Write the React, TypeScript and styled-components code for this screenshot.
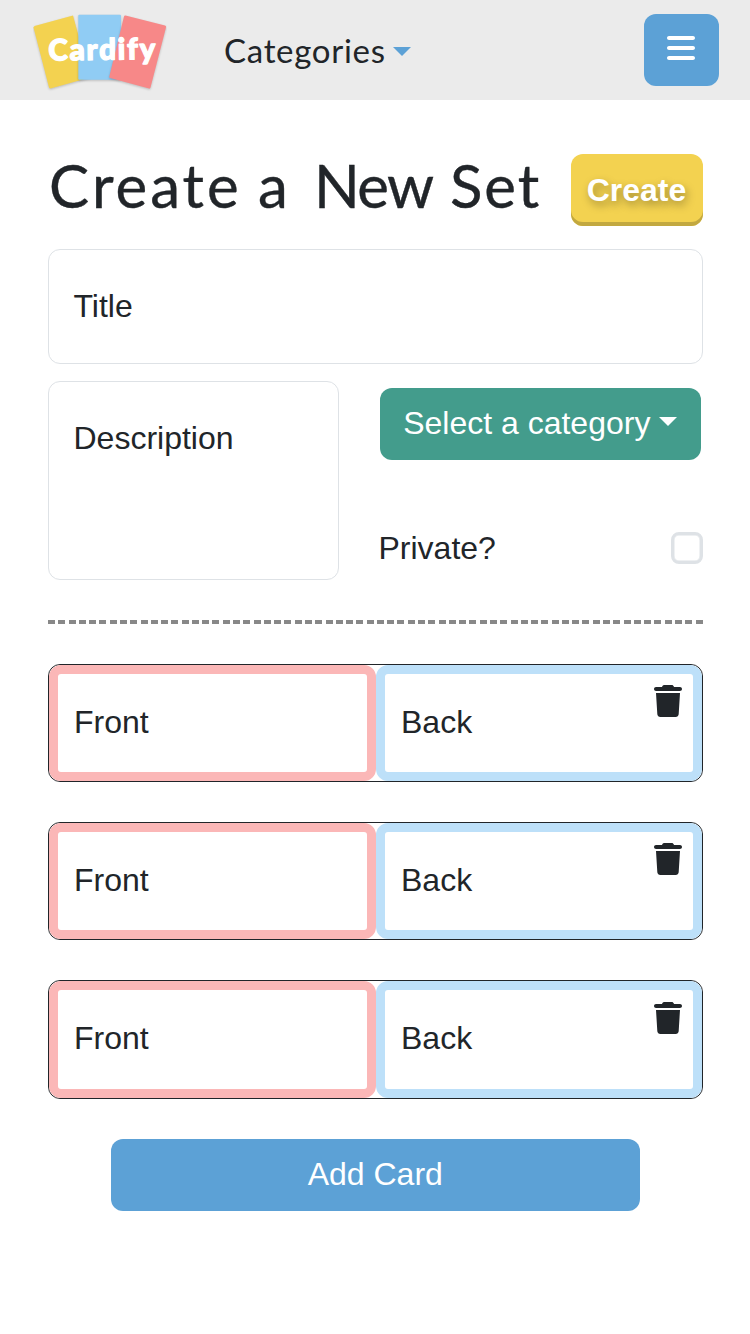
import React from "react";
import styled, { createGlobalStyle } from "styled-components";
import { FaBars, FaTrash } from "react-icons/fa6";

const ink = "#212529";
const blue = "#5ca1d6";

const GlobalStyle = createGlobalStyle`
  * { box-sizing: border-box; }
  body {
    margin: 0;
    background: #fff;
    color: ${ink};
    font: 32px/48px "Liberation Sans", Arial, sans-serif;
  }
  button { font: inherit; border: 0; cursor: pointer; }
`;

const Header = styled.header`
  display: flex;
  align-items: flex-start;
  height: 100px;
  padding: 13.5px 31px 0 33px;
  background: #ebebeb;
`;

const Logo = styled.svg`
  width: 134px;
  height: 78px;
  flex: none;
`;

const LogoCard = styled.g`
  filter: drop-shadow(0 1px 1px rgba(0, 0, 0, 0.2));
`;

const CategoriesLink = styled.button`
  display: flex;
  align-items: center;
  height: 72px;
  margin-left: 57px;
  padding: 0;
  background: none;
  color: ${ink};
  font: 33px/48px Lato, sans-serif;
  letter-spacing: 0.7px;
`;

const Caret = styled.span<{ color: string; gap: number; drop: number }>`
  width: 0;
  height: 0;
  margin: ${(p) => p.drop}px 0 0 ${(p) => p.gap}px;
  border: 9.5px solid transparent;
  border-top-color: ${(p) => p.color};
  border-bottom: 0;
`;

const MenuButton = styled.button`
  display: flex;
  justify-content: center;
  width: 75.5px;
  height: 72px;
  margin-left: auto;
  padding: 18.5px 0 0;
  border-radius: 12px;
  background: ${blue};
  color: #fff;
`;

const Main = styled.main`
  padding: 54px 47.5px 0 48px;
`;

const TitleRow = styled.div`
  display: flex;
  justify-content: space-between;
  height: 72px;
`;

const Heading = styled.h1`
  display: flex;
  margin: -5px 0 0 1px;
  font: 400 60px/72px Lato, sans-serif;
  -webkit-text-stroke: 0.4px ${ink};
  white-space: nowrap;
`;

const Word = styled.span<{ width: number; spacing: number }>`
  width: ${(p) => p.width}px;
  letter-spacing: ${(p) => p.spacing}px;
`;

const CreateButton = styled.button`
  width: 132px;
  height: 72px;
  padding: 0;
  border-radius: 12px;
  background: #f3d250;
  box-shadow: inset 0 -4px #c2a840;
  color: #fff;
  font-weight: 700;
  text-shadow: 2px 4px 8px rgba(0, 0, 0, 0.35);
`;

const Field = styled.div<{ height: number }>`
  height: ${(p) => p.height}px;
  padding: 32px 24.5px;
  border: 1px solid #dee2e6;
  border-radius: 12px;
`;

const TitleField = styled(Field)`
  margin-top: 23px;
`;

const Details = styled.div`
  display: grid;
  grid-template-columns: 291px 324px;
  justify-content: space-between;
  margin-top: 16.5px;
`;

const Options = styled.div`
  display: flex;
  flex-direction: column;
  justify-content: space-between;
  padding: 7px 0 8px;
`;

const SelectButton = styled.button`
  display: flex;
  align-items: center;
  justify-content: center;
  width: 321px;
  height: 72px;
  margin-left: 1px;
  padding: 0 0 2px;
  border-radius: 12px;
  background: #439c8c;
  color: #fff;
  white-space: nowrap;
`;

const PrivateRow = styled.label`
  display: flex;
  align-items: center;
  justify-content: space-between;
`;

const Checkbox = styled.input`
  appearance: none;
  width: 32px;
  height: 32px;
  margin: 0;
  border: 3px solid #dee2e6;
  border-radius: 8px;
  background: #fff;
  box-shadow: inset 0 0 0 0.5px #dee2e6;
`;

const Divider = styled.hr`
  height: 3.5px;
  margin: 40px 0;
  border: 0;
  background: repeating-linear-gradient(90deg, #888 0 7px, transparent 7px 10.278px);
`;

const CardList = styled.div`
  display: grid;
  gap: 40px;
`;

const Card = styled.div`
  display: grid;
  grid-template-columns: 327px 1fr;
  height: 118.4px;
  border: 1px solid ${ink};
  border-radius: 12px;
`;

const Side = styled.div<{ tone: string }>`
  display: flex;
  justify-content: space-between;
  padding: 24px 11px 0 16px;
  border: 9px solid ${(p) => p.tone};
  border-radius: 12px;
`;

const DeleteIcon = styled(FaTrash)`
  width: 28px;
  height: 32px;
  margin-top: -12.5px;
`;

const AddButton = styled.button`
  display: block;
  width: 529px;
  height: 72px;
  margin: 40px auto 0;
  padding: 0 0 2px;
  border-radius: 12px;
  background: ${blue};
  color: #fff;
`;

const words = [
  { text: "Create", width: 209, spacing: 3 },
  { text: "a", width: 56, spacing: 0 },
  { text: "New", width: 136, spacing: -1.6 },
  { text: "Set", width: 89, spacing: 2 },
];

export default function App() {
  return (
    <>
      <GlobalStyle />
      <Header>
        <Logo viewBox="33 13.5 134 78" aria-label="Cardify">
          <LogoCard>
            <path d="M34.5 25.5 73 15 90 77 50.5 88Q49.5 88 49 87L33.5 27Z" fill="#f3d250" />
          </LogoCard>
          <LogoCard>
            <rect x="78.3" y="14.2" width="42.7" height="65" rx="1" fill="#90ccf4" />
          </LogoCard>
          <LogoCard>
            <path d="M125.5 15 165 25Q166.5 25.5 166 27L150.5 87Q150 88.5 149 88L110 77.5Q109 77 109.3 76L124 16Q124.3 14.7 125.5 15Z" fill="#f78888" />
          </LogoCard>
          <text
            x="48.5"
            y="60"
            fill="#fff"
            stroke="#fff"
            strokeWidth="1.3"
            strokeLinejoin="round"
            fontFamily="Lato, sans-serif"
            fontSize="29.5"
            fontWeight="900"
            textLength="107"
            transform="rotate(-.8 48 60)"
          >
            Cardify
          </text>
        </Logo>
        <CategoriesLink>
          Categories
          <Caret color={blue} gap={7} drop={4} />
        </CategoriesLink>
        <MenuButton aria-label="Menu">
          <FaBars size={32} />
        </MenuButton>
      </Header>
      <Main>
        <TitleRow>
          <Heading>
            {words.map((w) => (
              <Word key={w.text} width={w.width} spacing={w.spacing}>{w.text} </Word>
            ))}
          </Heading>
          <CreateButton>Create</CreateButton>
        </TitleRow>
        <TitleField height={115}>Title</TitleField>
        <Details>
          <Field height={199.5}>Description</Field>
          <Options>
            <SelectButton>
              Select a category
              <Caret color="#fff" gap={8.5} drop={-2} />
            </SelectButton>
            <PrivateRow>
              Private?
              <Checkbox type="checkbox" />
            </PrivateRow>
          </Options>
        </Details>
        <Divider />
        <CardList>
          {[1, 2, 3].map((id) => (
            <Card key={id}>
              <Side tone="#fbb7b7">Front</Side>
              <Side tone="#bde0f9">
                Back
                <DeleteIcon />
              </Side>
            </Card>
          ))}
        </CardList>
        <AddButton>Add Card</AddButton>
      </Main>
    </>
  );
}
